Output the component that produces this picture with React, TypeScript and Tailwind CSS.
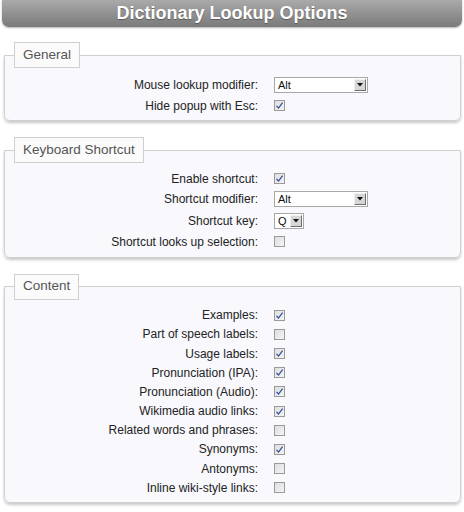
import type { ReactNode } from "react"

type Option =
  | { label: string; kind: "check"; checked: boolean }
  | { label: string; kind: "select"; value: string; width: "wide" | "narrow" }

const general: Option[] = [
  { label: "Mouse lookup modifier:", kind: "select", value: "Alt", width: "wide" },
  { label: "Hide popup with Esc:", kind: "check", checked: true },
]

const keyboard: Option[] = [
  { label: "Enable shortcut:", kind: "check", checked: true },
  { label: "Shortcut modifier:", kind: "select", value: "Alt", width: "wide" },
  { label: "Shortcut key:", kind: "select", value: "Q", width: "narrow" },
  { label: "Shortcut looks up selection:", kind: "check", checked: false },
]

const content: Option[] = [
  { label: "Examples:", kind: "check", checked: true },
  { label: "Part of speech labels:", kind: "check", checked: false },
  { label: "Usage labels:", kind: "check", checked: true },
  { label: "Pronunciation (IPA):", kind: "check", checked: true },
  { label: "Pronunciation (Audio):", kind: "check", checked: true },
  { label: "Wikimedia audio links:", kind: "check", checked: true },
  { label: "Related words and phrases:", kind: "check", checked: false },
  { label: "Synonyms:", kind: "check", checked: true },
  { label: "Antonyms:", kind: "check", checked: false },
  { label: "Inline wiki-style links:", kind: "check", checked: false },
]

export default function App() {
  return (
    <div className="min-h-[512px] bg-white pb-4 font-['Liberation_Sans',Arial,sans-serif] text-[12px] text-[#222]">
      <header className="mx-[2px] flex h-[27px] items-center justify-center rounded-b-[7px] bg-linear-to-b from-[#aaaaaa] to-[#7a7a7a] pb-[2px] shadow-[0_1px_2px_rgba(0,0,0,0.3)]">
        <h1 className="text-[18px] font-bold leading-none text-white [text-shadow:0_1px_1px_rgba(0,0,0,0.35)]">
          Dictionary Lookup Options
        </h1>
      </header>

      <div className="mt-[15px] flex flex-col gap-4">
        <Section title="General" items={general} />
        <Section title="Keyboard Shortcut" items={keyboard} />
        <Section title="Content" items={content} />
      </div>
    </div>
  )
}

function Section({ title, items }: { title: string; items: Option[] }) {
  return (
    <fieldset className="ml-[4px] mr-[3px] rounded-b-[6px] border border-[#cfcfd4] bg-[#f8f8fd] shadow-[0_2px_3px_rgba(0,0,0,0.22)]">
      <legend className="ml-[9px] flex h-[26px] items-center border border-[#cfcfcf] bg-[#fbfbfb] px-[8px] text-[13.5px] text-[#555]">
        {title}
      </legend>
      <div className="grid grid-cols-[253px_1fr] gap-x-4 pt-[6px] pb-[5px]">
        {items.map((item) => (
          <Row key={item.label} label={item.label} tall={item.kind === "select"}>
            {item.kind === "check" ? (
              <Checkbox checked={item.checked} />
            ) : (
              <Select value={item.value} width={item.width} />
            )}
          </Row>
        ))}
      </div>
    </fieldset>
  )
}

function Row({ label, tall, children }: { label: string; tall: boolean; children: ReactNode }) {
  const h = tall ? "h-[22px]" : "h-[19.2px]"
  return (
    <>
      <div className={`${h} flex items-center justify-end`}>{label}</div>
      <div className={`${h} flex items-center`}>{children}</div>
    </>
  )
}

function Checkbox({ checked }: { checked: boolean }) {
  return (
    <span className="flex h-[11px] w-[11px] items-center justify-center border border-[#9a9a9a] bg-linear-to-br from-[#dedede] to-[#f4f4f4]">
      {checked && (
        <svg width="9" height="9" viewBox="0 0 9 9">
          <path d="M1.5 4.8 L3.5 7 L7.6 1.6" fill="none" stroke="#2f4c9f" strokeWidth="1.2" />
        </svg>
      )}
    </span>
  )
}

function Select({ value, width }: { value: string; width: "wide" | "narrow" }) {
  return (
    <span
      className={`${width === "wide" ? "w-[94px]" : "w-[30px]"} flex h-[16px] items-center border border-[#a8a8a8] bg-white pl-[3px] text-[11px] leading-none text-[#111]`}
    >
      <span className="pt-[1px]">{value}</span>
      <span className="ml-auto mr-[1px] flex h-[12px] w-[12px] items-center justify-center border border-t-[#f0f0f0] border-l-[#f0f0f0] border-r-[#6e6e6e] border-b-[#6e6e6e] bg-[#d6d6d6]">
        <svg width="6" height="4" viewBox="0 0 6 4">
          <path d="M0 0 H6 L3 3.5 Z" fill="#111" />
        </svg>
      </span>
    </span>
  )
}
